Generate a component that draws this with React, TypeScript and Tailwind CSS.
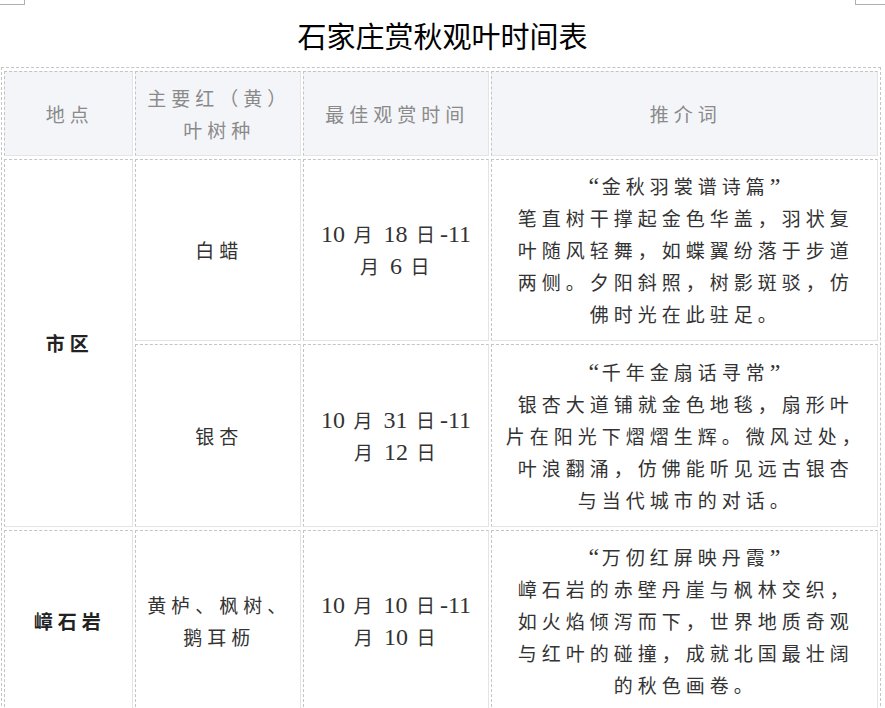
import React from "react";

const cellBase =
  "border [border-style:dashed_solid_solid_dashed] border-t-[#c4c4c4] border-l-[#c4c4c4] border-r-[#e4e4e4] border-b-[#e4e4e4] text-center align-middle p-0";

const CJK = /([\u3000-\u303f\u4e00-\u9fff\uff00-\uffef]+)/;

function Rich({ text }: { text: string }) {
  const parts = text.split(CJK).filter((p) => p.length > 0);
  return (
    <>
      {parts.map((p, i) =>
        CJK.test(p) ? (
          <span
            key={i}
            className="pl-[2.5px] text-[19px] leading-none tracking-[5px] font-['Noto_Sans_CJK_SC',sans-serif]"
          >
            {p}
          </span>
        ) : (
          <span key={i} className="whitespace-pre">
            {p}
          </span>
        )
      )}
    </>
  );
}

function Lines({ lines, className = "" }: { lines: string[]; className?: string }) {
  return (
    <div className={"flex flex-col items-center " + className}>
      {lines.map((l, i) => (
        <div key={i} className="whitespace-nowrap leading-[32px]">
          <Rich text={l} />
        </div>
      ))}
    </div>
  );
}

const rows = [
  {
    tree: ["白蜡"],
    time: ["10 月 18 日-11", "月 6 日"],
    desc: [
      "“金秋羽裳谱诗篇”",
      "笔直树干撑起金色华盖，羽状复",
      "叶随风轻舞，如蝶翼纷落于步道",
      "两侧。夕阳斜照，树影斑驳，仿",
      "佛时光在此驻足。",
    ],
  },
  {
    tree: ["银杏"],
    time: ["10 月 31 日-11", "月 12 日"],
    desc: [
      "“千年金扇话寻常”",
      "银杏大道铺就金色地毯，扇形叶",
      "片在阳光下熠熠生辉。微风过处，",
      "叶浪翻涌，仿佛能听见远古银杏",
      "与当代城市的对话。",
    ],
  },
  {
    tree: ["黄栌、枫树、", "鹅耳枥"],
    time: ["10 月 10 日-11", "月 10 日"],
    desc: [
      "“万仞红屏映丹霞”",
      "嶂石岩的赤壁丹崖与枫林交织，",
      "如火焰倾泻而下，世界地质奇观",
      "与红叶的碰撞，成就北国最壮阔",
      "的秋色画卷。",
    ],
  },
];

export default function App() {
  const font = "font-['Liberation_Serif','Noto_Sans_CJK_SC',serif]";
  const head = cellBase + " bg-[#f4f5f9] font-normal text-[#8a8a8a]";
  return (
    <div className={"relative w-[885px] bg-white " + font}>
      <div className="absolute left-0 top-[4px] h-px w-[25px] bg-[#b0b0b0]" />
      <div className="absolute left-[24px] top-0 h-[5px] w-px bg-[#b0b0b0]" />
      <div className="absolute left-[855px] top-[4px] h-px w-[30px] bg-[#b0b0b0]" />
      <div className="absolute left-[855px] top-0 h-[5px] w-px bg-[#b0b0b0]" />

      <div className="flex h-[67px] items-center justify-center pt-[3px] font-['Noto_Sans_CJK_SC',sans-serif] text-[29px] leading-none text-black">
        石家庄赏秋观叶时间表
      </div>

      <table className="ml-[1px] w-[880px] table-fixed border border-dashed border-[#c4c4c4] border-separate border-spacing-x-[2px] border-spacing-y-[3px] text-[24px] text-[#333]">
        <colgroup>
          <col className="w-[129px]" />
          <col className="w-[166px]" />
          <col className="w-[186px]" />
          <col className="w-[387px]" />
        </colgroup>
        <thead>
          <tr className="h-[85px]">
            <th className={head}>
              <Lines lines={["地点"]} />
            </th>
            <th className={head}>
              <Lines lines={["主要红（黄）", "叶树种"]} />
            </th>
            <th className={head}>
              <Lines lines={["最佳观赏时间"]} />
            </th>
            <th className={head}>
              <Lines lines={["推介词"]} />
            </th>
          </tr>
        </thead>
        <tbody>
          <tr className="h-[182px]">
            <td rowSpan={2} className={cellBase + " font-bold text-[#222]"}>
              <Lines lines={["市区"]} />
            </td>
            <td className={cellBase}>
              <Lines lines={rows[0].tree} />
            </td>
            <td className={cellBase}>
              <Lines lines={rows[0].time} />
            </td>
            <td className={cellBase}>
              <Lines lines={rows[0].desc} />
            </td>
          </tr>
          <tr className="h-[183px]">
            <td className={cellBase}>
              <Lines lines={rows[1].tree} />
            </td>
            <td className={cellBase}>
              <Lines lines={rows[1].time} />
            </td>
            <td className={cellBase}>
              <Lines lines={rows[1].desc} />
            </td>
          </tr>
          <tr className="h-[182px]">
            <td className={cellBase + " font-bold text-[#222]"}>
              <Lines lines={["嶂石岩"]} />
            </td>
            <td className={cellBase}>
              <Lines lines={rows[2].tree} />
            </td>
            <td className={cellBase}>
              <Lines lines={rows[2].time} />
            </td>
            <td className={cellBase}>
              <Lines lines={rows[2].desc} />
            </td>
          </tr>
        </tbody>
      </table>
    </div>
  );
}
